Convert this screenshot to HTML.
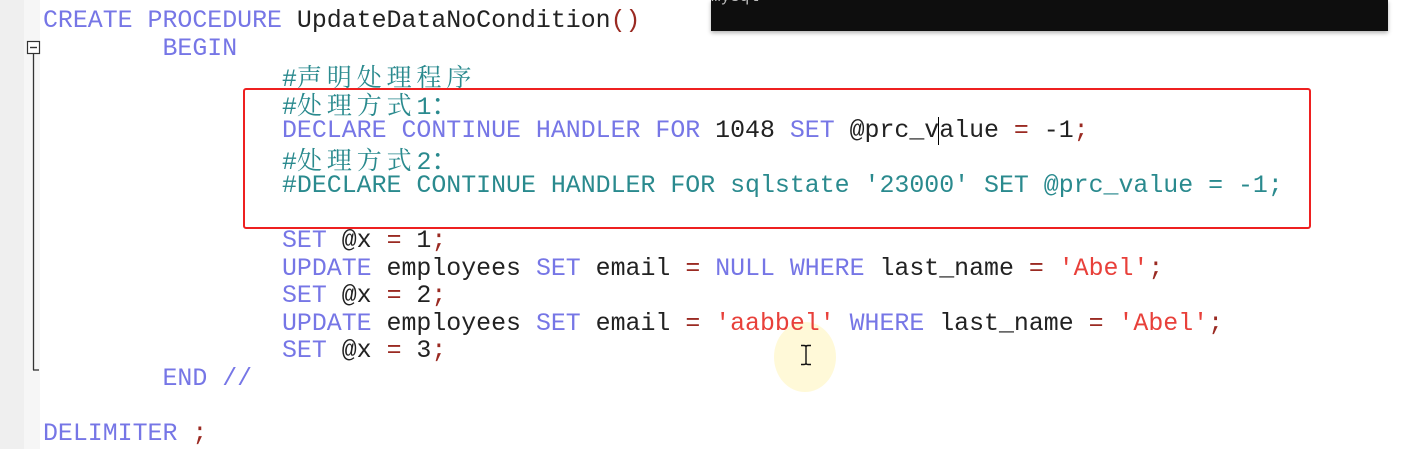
<!DOCTYPE html>
<html><head><meta charset="utf-8"><style>
html,body{margin:0;padding:0;}
body{width:1403px;height:449px;overflow:hidden;background:#fff;position:relative;font-family:"Liberation Mono",monospace;}
.g1{position:absolute;left:0;top:0;width:24px;height:449px;background:#efefef;}
.g2{position:absolute;left:24px;top:0;width:16px;height:449px;background:#f6f6f6;}
.code{position:absolute;left:43px;top:8px;font-size:24.9px;line-height:27.5px;color:#222;}
.l{height:27.5px;white-space:pre;}
.k{color:#7676e6;}
.c{color:#2a8a8e;}
.s{color:#e8403a;}
.o{color:#9a2a22;}
.cj{font-family:"Noto Serif CJK SC","Noto Sans CJK SC",serif;font-size:25px;letter-spacing:4.9px;line-height:27.5px;}
.w{display:inline-block;width:14.94px;overflow:visible;}
.term{position:absolute;left:711px;top:0;width:677px;height:31px;background:#0e0e0e;box-shadow:0 2px 4px rgba(0,0,0,.3);overflow:hidden;}
.term span{position:absolute;left:0;top:-12px;color:#bbb;font-size:16px;font-family:"Liberation Mono",monospace;}
.box{position:absolute;left:243px;top:88px;width:1064px;height:137px;border:2.5px solid #ee2020;border-radius:3px;}
.hl{position:absolute;left:774px;top:322px;width:62px;height:70px;border-radius:50%;background:rgba(255,245,190,.6);}
</style></head><body>
<div class="g1"></div><div class="g2"></div>
<svg style="position:absolute;left:0;top:0" width="60" height="449">
<rect x="27.5" y="41.5" width="12" height="12" fill="#fff" stroke="#333" stroke-width="1.2"/>
<line x1="30" y1="47.5" x2="37" y2="47.5" stroke="#333" stroke-width="1.4"/>
<line x1="33.5" y1="54" x2="33.5" y2="370" stroke="#333" stroke-width="1.3"/>
<line x1="33" y1="370" x2="39" y2="370" stroke="#333" stroke-width="1.3"/>
</svg>
<div class="hl"></div>
<div class="code"><div class="l"><span class="k">CREATE PROCEDURE</span> UpdateDataNoCondition<span class="o">()</span></div><div class="l">        <span class="k">BEGIN</span></div><div class="l">                <span class="c">#<span class="cj">声明处理程序</span></span></div><div class="l">                <span class="c">#<span class="cj">处理方式</span>1<span class="w">：</span></span></div><div class="l">                <span class="k">DECLARE CONTINUE HANDLER FOR</span> 1048 <span class="k">SET</span> @prc_v<span style="border-left:1.5px solid #000;margin-left:-1px"></span>alue <span class="o">=</span> -1<span class="o">;</span></div><div class="l">                <span class="c">#<span class="cj">处理方式</span>2<span class="w">：</span></span></div><div class="l">                <span class="c">#DECLARE CONTINUE HANDLER FOR sqlstate '23000' SET @prc_value = -1;</span></div><div class="l"> </div><div class="l">                <span class="k">SET</span> @x <span class="o">=</span> 1<span class="o">;</span></div><div class="l">                <span class="k">UPDATE</span> employees <span class="k">SET</span> email <span class="o">=</span> <span class="k">NULL WHERE</span> last_name <span class="o">=</span> <span class="s">'Abel'</span><span class="o">;</span></div><div class="l">                <span class="k">SET</span> @x <span class="o">=</span> 2<span class="o">;</span></div><div class="l">                <span class="k">UPDATE</span> employees <span class="k">SET</span> email <span class="o">=</span> <span class="s">'aabbel'</span> <span class="k">WHERE</span> last_name <span class="o">=</span> <span class="s">'Abel'</span><span class="o">;</span></div><div class="l">                <span class="k">SET</span> @x <span class="o">=</span> 3<span class="o">;</span></div><div class="l">        <span class="k">END //</span></div><div class="l"> </div><div class="l"><span class="k">DELIMITER</span> <span class="o">;</span></div></div>
<div class="box"></div>
<div class="term"><span>mysql&gt;</span></div>
<svg style="position:absolute;left:799px;top:344px" width="14" height="22">
<path d="M2 1.5h3M9 1.5h3M7 2v18M2 20.5h3M9 20.5h3M5 1.5q2 0 2 1.5M9 1.5q-2 0-2 1.5M5 20.5q2 0 2-1.5M9 20.5q-2 0-2-1.5" stroke="#111" stroke-width="1.4" fill="none"/>
</svg>
</body></html>
